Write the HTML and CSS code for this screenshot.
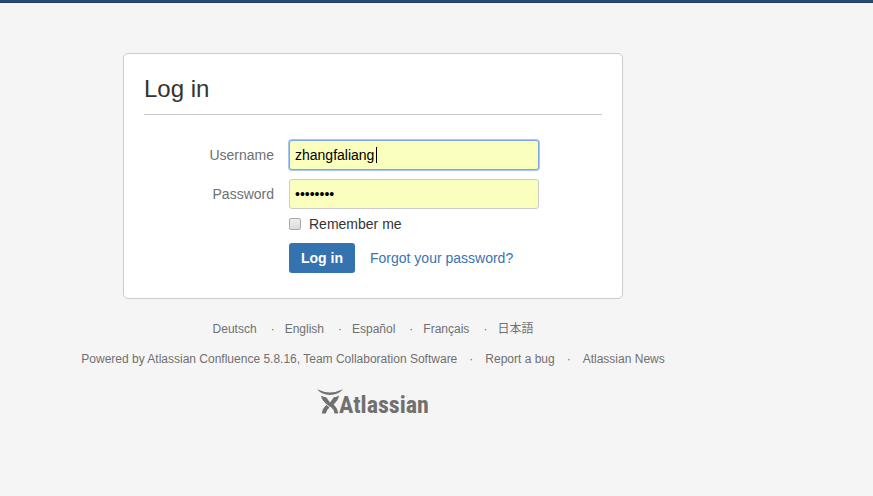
FILE: index.html
```html
<!DOCTYPE html>
<html lang="en">
<head>
<meta charset="utf-8">
<title>Log in - Confluence</title>
<link rel="stylesheet" href="styles.css">
</head>
<body>
<header class="topbar"></header>
<div class="page">
  <main class="card">
    <h1 class="title">Log in</h1>
    <form class="form">
      <label class="label" for="username">Username</label>
      <div class="field">
        <input class="input focused" id="username" type="text" value="zhangfaliang">
        <span class="caret"></span>
      </div>
      <label class="label" for="password">Password</label>
      <div class="field"><input class="input" id="password" type="password" value="password"></div>
      <div class="remember">
        <input class="check" id="remember" type="checkbox">
        <label for="remember">Remember me</label>
      </div>
      <div class="actions">
        <button class="button" type="submit">Log in</button>
        <a class="forgot" href="#">Forgot your password?</a>
      </div>
    </form>
  </main>
  <footer class="footer">
    <ul class="links languages">
      <li><a href="#">Deutsch</a></li>
      <li><a href="#">English</a></li>
      <li><a href="#">Español</a></li>
      <li><a href="#">Français</a></li>
      <li><a href="#" lang="ja">日本語</a></li>
    </ul>
    <ul class="links">
      <li>Powered by <a href="#">Atlassian Confluence</a> 5.8.16, <a href="#">Team Collaboration Software</a></li>
      <li><a href="#">Report a bug</a></li>
      <li><a href="#">Atlassian News</a></li>
    </ul>
    <a class="logo" href="#">
      <svg class="mark" viewBox="0 0 26 26" width="26" height="26" aria-hidden="true">
        <path d="M0 0.300Q13 6.500 26 0.300Q21 6 13 6Q5 6 0 0.300Z"/>
        <path d="M4 6.500Q6.500 8 9.200 8.200L13 13.500L16.800 8.200Q19.500 8 22 6.500Q21.500 11 16.600 15.500Q20.500 19 21.200 24.500H17.600Q17 20.500 13.500 17.600L12 19Q9.300 21 8.800 24.500H4.800Q5.500 19 9.900 15.500Q4.500 11 4 6.500Z"/>
        <path class="slit" d="M9.500 15.500L13 18.500"/>
      </svg>
      <span>Atlassian</span>
    </a>
  </footer>
</div>
</body>
</html>
```
FILE: styles.css
```css
* { box-sizing: border-box; }
body {
  margin: 0;
  background: #f5f5f5;
  color: #333;
  font: 14px/20px "Liberation Sans", "Noto Sans CJK JP", sans-serif;
}
a { color: #3b73af; text-decoration: none; }
.topbar { height: 3px; background: #205081; border-bottom: 1px solid #2e3d54; }
.page { padding: 50px 127px 0 0; }
.card {
  max-width: 500px;
  margin: 0 auto;
  padding: 20px 20px 25px;
  background: #fff;
  border: 1px solid #ccc;
  border-radius: 5px;
}
.title {
  margin: 0 0 25px;
  padding-bottom: 10px;
  border-bottom: 1px solid #ccc;
  font-size: 24px;
  font-weight: normal;
  line-height: 30px;
}
.form {
  display: grid;
  grid-template-columns: 130px 1fr;
  column-gap: 15px;
  row-gap: 9px;
  align-items: center;
}
.label { color: #707070; text-align: right; }
.field { position: relative; width: 250px; height: 30px; }
.input {
  display: block;
  width: 100%;
  height: 30px;
  padding: 4px 5px;
  border: 1px solid #ccc;
  border-radius: 3px;
  outline: none;
  background: #faffbd;
  color: #000;
  font: inherit;
}
.focused { border-color: #7fa6e4; box-shadow: 0 0 0 1px #a4c6fd; }
.caret { position: absolute; left: 87px; top: 7px; width: 1px; height: 16px; background: #000; }
.remember {
  grid-column: 2;
  display: flex;
  align-items: center;
  gap: 8px;
  height: 12px;
  margin-bottom: 4px;
}
.check {
  appearance: none;
  width: 12px;
  height: 12px;
  margin: 0;
  border: 1px solid #aaa;
  border-radius: 2px;
  background: linear-gradient(#eee, #dcdcdc);
}
.actions { grid-column: 2; display: flex; align-items: center; gap: 15px; }
.button {
  height: 30px;
  padding: 0 12px;
  border: 0;
  border-radius: 3px;
  background: #3572b0;
  color: #fff;
  font: bold 14px/20px "Liberation Sans", sans-serif;
}
.footer {
  display: flex;
  flex-direction: column;
  align-items: center;
  gap: 10px;
  padding-top: 20px;
  color: #707070;
  font-size: 12px;
}
.footer a { color: inherit; }
.links { display: flex; margin: 0; padding: 0; list-style: none; white-space: nowrap; }
.links li + li::before { content: "·"; display: inline-block; width: 4px; margin: 0 12px; }
.languages li + li::before { margin: 0 10px 0 14px; }
.logo {
  display: flex;
  align-items: flex-start;
  margin-top: 10px;
  font: bold 24px/32px "Roboto Condensed", Roboto, sans-serif;
}
.mark { flex: none; fill: #707070; margin-right: -4px; }
.slit { fill: none; stroke: #f5f5f5; stroke-width: 1px; }
```
